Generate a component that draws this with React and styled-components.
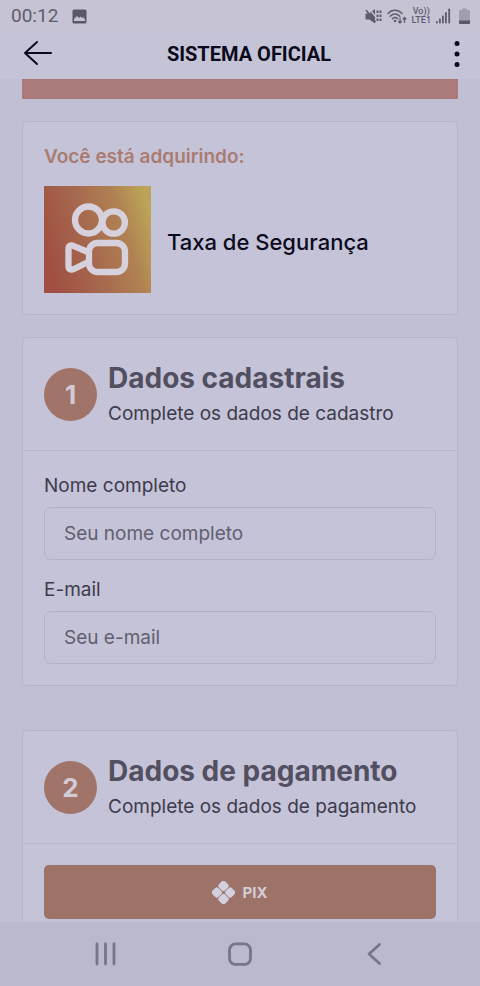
import styled, { createGlobalStyle } from "styled-components";

const GlobalStyle = createGlobalStyle`
  * {
    box-sizing: border-box;
  }
  body {
    margin: 0;
    background-color: #c1bfd3;
    font-family: "Inter", "Liberation Sans", sans-serif;
    color: #3d3b4c;
  }
  h1, h2, p {
    margin: 0;
  }
`;

const Screen = styled.div`
  display: flex;
  flex-direction: column;
  height: 100vh;
  overflow: hidden;
`;

const StatusBar = styled.div`
  display: flex;
  align-items: center;
  justify-content: space-between;
  height: 32px;
  padding: 0 10px 0 11px;
  background-color: #c5c3d4;
  color: #5f5d6d;
`;

const StatusGroup = styled.div`
  display: flex;
  align-items: center;
  gap: ${(props) => props.$gap}px;
`;

const Clock = styled.span`
  font-family: "Roboto", sans-serif;
  font-size: 19px;
  line-height: 32px;
`;

const Carrier = styled.span`
  display: flex;
  flex-direction: column;
  align-items: center;
  font-family: "Roboto", sans-serif;
  font-size: 9px;
  font-weight: 500;
  line-height: 9px;
`;

const AppBar = styled.header`
  display: grid;
  grid-template-columns: 32px 1fr 26px;
  align-items: center;
  height: 47px;
  padding: 0 10px 4px 22px;
  background-color: #c5c4d7;
  color: #0b0a1c;
`;

const AppTitle = styled.h1`
  font-family: "Roboto", sans-serif;
  font-size: 20px;
  font-weight: 700;
  line-height: 28px;
  text-align: center;
`;

const IconButton = styled.button`
  display: flex;
  align-items: center;
  justify-content: center;
  padding: 0;
  border: none;
  background: none;
  color: inherit;
  cursor: pointer;
`;

const Content = styled.main`
  flex: 1;
  min-height: 0;
  overflow: hidden;
  padding: 0 22px;
`;

const Banner = styled.div`
  height: 20px;
  margin-bottom: 22px;
  background-color: #ab7b7b;
`;

const Card = styled.section`
  margin-bottom: ${(props) => props.$space || 22}px;
  border: 1px solid #b6b4c9;
  border-radius: 4px;
  background-color: #c5c3d7;
`;

const CardBody = styled.div`
  padding: 21px;
`;

const Acquiring = styled.p`
  margin-bottom: 16px;
  font-size: 19px;
  font-weight: 600;
  line-height: 27px;
  color: #a97c72;
`;

const Product = styled.div`
  display: flex;
  align-items: center;
  gap: 16px;
`;

const ProductName = styled.h2`
  padding-top: 5px;
  font-size: 22px;
  font-weight: 500;
  line-height: 28px;
  color: #0b0a1c;
`;

const CardHeader = styled.div`
  display: flex;
  align-items: center;
  gap: 11px;
  padding: 20px 21px;
  border-bottom: 1px solid #b6b4c9;
`;

const StepNumber = styled.span`
  display: flex;
  align-items: center;
  justify-content: center;
  width: 53px;
  height: 53px;
  border-radius: 50%;
  background-color: #a17469;
  color: #d3cad7;
  font-size: 26px;
  font-weight: 700;
`;

const StepTitle = styled.h2`
  font-size: 28px;
  font-weight: 700;
  line-height: 40px;
  color: #514f60;
`;

const StepText = styled.p`
  font-size: 19px;
  line-height: 32px;
`;

const Form = styled.form`
  display: flex;
  flex-direction: column;
  gap: 16px;
  padding: 21px;
`;

const Field = styled.div`
  display: flex;
  flex-direction: column;
  gap: 8px;
`;

const Label = styled.label`
  font-size: 19px;
  line-height: 27px;
`;

const Input = styled.input`
  width: 100%;
  height: 53px;
  padding: 0 19px;
  border: 1px solid #b3b1c6;
  border-radius: 7px;
  background-color: transparent;
  font-family: inherit;
  font-size: 19px;
  color: #3d3b4c;
  outline: none;

  &::placeholder {
    color: #615f70;
    opacity: 1;
  }
`;

const PixButton = styled.button`
  display: flex;
  align-items: center;
  justify-content: center;
  gap: 7px;
  width: 100%;
  height: 54px;
  border: none;
  border-radius: 5px;
  background-color: #9d7369;
  color: #d3cbd8;
  font-family: inherit;
  font-size: 15px;
  font-weight: 700;
  cursor: pointer;
`;

const NavBar = styled.nav`
  display: grid;
  grid-template-columns: repeat(3, 1fr);
  height: 64px;
  padding: 0 38px;
  background-color: #bbb9ce;
  color: #777588;
`;

const PictureIcon = () => (
  <svg width="15" height="15" viewBox="0 0 15 15">
    <rect x="0.5" y="0.5" width="14" height="14" rx="1.5" fill="#5a5868" />
    <path d="M2 12v-2l3-3 2 2 1.5-1.5L10 9l1-1 2 2.5V12z" fill="#c5c3d4" />
  </svg>
);

const MuteIcon = () => (
  <svg width="17" height="17" viewBox="0 0 17 17" fill="none" stroke="currentColor">
    <path d="M0.500 5.500h3.500L10 1v14.500L4.500 11.500h-4z" fill="currentColor" stroke="none" />
    <path d="M4.500 1.500l6 7" stroke="#c5c3d4" strokeWidth="1.300" />
    <path d="M1 2l9.500 12" strokeWidth="1.500" />
    <path d="M12.500 2.500v11M15.500 2.500v11" strokeWidth="2" strokeDasharray="2.500 1.500" />
  </svg>
);

const WifiIcon = () => (
  <svg width="20" height="17" viewBox="0 0 20 17" fill="none" stroke="currentColor">
    <path d="M1 5.500C5 1.200 11 1.200 15 5.500M3.200 8.200c3-3 6.600-3 9.600 0M5.500 10.800c1.500-1.600 3.500-1.600 5 0" strokeWidth="1.500" strokeLinecap="round" />
    <circle cx="8" cy="13" r="1.300" fill="currentColor" stroke="none" />
    <path d="M13 9.500v5M11.200 13l1.800 2 1.800-2M17.500 15v-5M15.700 11.500l1.800-2 1.800 2" strokeWidth="1.200" />
  </svg>
);

const SignalIcon = () => (
  <svg width="18" height="16" viewBox="0 0 18 16" fill="currentColor">
    <rect x="0" y="13" width="1.800" height="2.500" rx="0.800" />
    <rect x="3" y="10.500" width="1.800" height="5" rx="0.800" />
    <rect x="6" y="7.500" width="1.800" height="8" rx="0.800" />
    <rect x="9" y="4" width="1.800" height="11.500" rx="0.800" />
    <rect x="12.300" y="0.500" width="1.800" height="15" rx="0.800" />
  </svg>
);

const BatteryIcon = () => (
  <svg width="11" height="16" viewBox="0 0 11 16">
    <path d="M3 0.500h5V2h2a1 1 0 0 1 1 1v12a1 1 0 0 1-1 1H1a1 1 0 0 1-1-1V3a1 1 0 0 1 1-1h2z" fill="#a19fae" />
    <path d="M0 12.500h11V15a1 1 0 0 1-1 1H1a1 1 0 0 1-1-1z" fill="#5a5868" />
  </svg>
);

const BackArrow = () => (
  <svg width="32" height="28" viewBox="0 0 32 28" fill="none" stroke="currentColor" strokeWidth="2" strokeLinecap="round" strokeLinejoin="round">
    <path d="M29 13H3M15 2L3 13l12 11" />
  </svg>
);

const DotsIcon = () => (
  <svg width="6" height="28" viewBox="0 0 6 28" fill="currentColor">
    <circle cx="3" cy="3.500" r="2.500" />
    <circle cx="3" cy="14" r="2.500" />
    <circle cx="3" cy="24.500" r="2.500" />
  </svg>
);

const KwaiLogo = () => (
  <svg width="107" height="107" viewBox="0 0 107 107" role="img" aria-label="Kwai">
    <defs>
      <linearGradient id="kwai" x1="0" y1="0.600" x2="1" y2="0.300">
        <stop offset="0" stopColor="#a04f42" />
        <stop offset="0.400" stopColor="#a6684e" />
        <stop offset="0.750" stopColor="#b08252" />
        <stop offset="1" stopColor="#bba458" />
      </linearGradient>
    </defs>
    <rect width="107" height="107" fill="url(#kwai)" />
    <g fill="none" stroke="#d6d1dd" strokeWidth="6.300" strokeLinejoin="round">
      <circle cx="44.500" cy="34" r="13.500" />
      <circle cx="69.700" cy="36.500" r="11.200" />
      <rect x="45" y="57" width="36" height="29" rx="8.500" />
      <path d="M45 66.500L30.500 60.300Q24.500 57.500 24.500 63V80Q24.500 85.500 30.500 82.700L45 75.500" />
    </g>
  </svg>
);

const PixIcon = () => (
  <svg width="23" height="23" viewBox="0 0 23 23">
    <g transform="translate(11.500 11.500) rotate(45)" fill="#d3d0df">
      <rect x="-9" y="-9" width="8.600" height="8.600" rx="2.200" />
      <rect x="0.400" y="-9" width="8.600" height="8.600" rx="2.200" />
      <rect x="-9" y="0.400" width="8.600" height="8.600" rx="2.200" />
      <rect x="0.400" y="0.400" width="8.600" height="8.600" rx="2.200" />
    </g>
  </svg>
);

const RecentsIcon = () => (
  <svg width="24" height="24" viewBox="0 0 24 24" stroke="currentColor" strokeWidth="2.800" strokeLinecap="round">
    <path d="M4 2v20M12.500 2v20M21 2v20" />
  </svg>
);

const HomeIcon = () => (
  <svg width="26" height="24" viewBox="0 0 26 24" fill="none" stroke="currentColor" strokeWidth="2.800">
    <rect x="2.500" y="1.900" width="21" height="20.500" rx="6" />
  </svg>
);

const BackIcon = () => (
  <svg width="24" height="24" viewBox="0 0 24 24" fill="none" stroke="currentColor" strokeWidth="2.800" strokeLinecap="round" strokeLinejoin="round">
    <path d="M16.500 2.500L6 12l10.500 9.500" />
  </svg>
);

const StepHeader = ({ number, title, text }) => (
  <CardHeader>
    <StepNumber>{number}</StepNumber>
    <div>
      <StepTitle>{title}</StepTitle>
      <StepText>{text}</StepText>
    </div>
  </CardHeader>
);

const App = () => {
  return (
    <Screen>
      <GlobalStyle />
      <StatusBar>
        <StatusGroup $gap={14}>
          <Clock>00:12</Clock>
          <PictureIcon />
        </StatusGroup>
        <StatusGroup $gap={5}>
          <MuteIcon />
          <WifiIcon />
          <Carrier>
            <span>Vo))</span>
            <span>LTE1</span>
          </Carrier>
          <SignalIcon />
          <BatteryIcon />
        </StatusGroup>
      </StatusBar>
      <AppBar>
        <IconButton aria-label="Voltar">
          <BackArrow />
        </IconButton>
        <AppTitle>SISTEMA OFICIAL</AppTitle>
        <IconButton aria-label="Mais opções">
          <DotsIcon />
        </IconButton>
      </AppBar>
      <Content>
        <Banner />
        <Card>
          <CardBody>
            <Acquiring>Você está adquirindo:</Acquiring>
            <Product>
              <KwaiLogo />
              <ProductName>Taxa de Segurança</ProductName>
            </Product>
          </CardBody>
        </Card>
        <Card $space={44}>
          <StepHeader number="1" title="Dados cadastrais" text="Complete os dados de cadastro" />
          <Form>
            <Field>
              <Label htmlFor="nome">Nome completo</Label>
              <Input id="nome" type="text" placeholder="Seu nome completo" />
            </Field>
            <Field>
              <Label htmlFor="email">E-mail</Label>
              <Input id="email" type="email" placeholder="Seu e-mail" />
            </Field>
          </Form>
        </Card>
        <Card>
          <StepHeader number="2" title="Dados de pagamento" text="Complete os dados de pagamento" />
          <CardBody>
            <PixButton type="button">
              <PixIcon />
              PIX
            </PixButton>
          </CardBody>
        </Card>
      </Content>
      <NavBar>
        <IconButton aria-label="Recentes">
          <RecentsIcon />
        </IconButton>
        <IconButton aria-label="Início">
          <HomeIcon />
        </IconButton>
        <IconButton aria-label="Voltar">
          <BackIcon />
        </IconButton>
      </NavBar>
    </Screen>
  );
};

export default App;
